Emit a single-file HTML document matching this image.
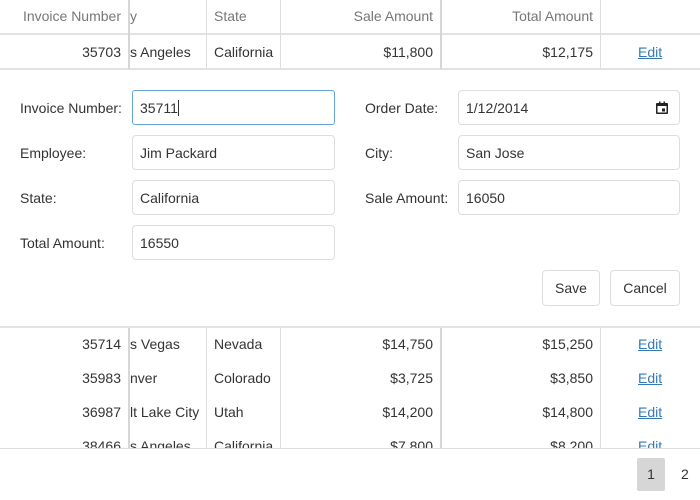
<!DOCTYPE html><html><head><style>
body{margin:0;width:700px;height:500px;position:relative;overflow:hidden;background:#fff;font-family:"Liberation Sans",sans-serif;font-size:14px;color:#333}
.a{position:absolute;line-height:20px;white-space:nowrap}
.r{text-align:right}
.h{color:#777}
.v{position:absolute;background:#ddd;width:1px}
.hl{position:absolute;left:0;width:700px;height:2px;background:#e2e2e2}
.in{position:absolute;box-sizing:border-box;border:1px solid #ddd;border-radius:4px;height:35px;line-height:35px;padding-left:7px;background:#fff}
.btn{position:absolute;box-sizing:border-box;border:1px solid #ddd;border-radius:4px;height:36px;line-height:35px;text-align:center;background:#fff}
a{color:#337ab7;text-decoration:underline}
</style></head><body>
<div class="a h r" style="left:0;width:121px;top:6px">Invoice Number</div>
<div class="a h" style="left:130px;top:6px">y</div>
<div class="a h" style="left:214px;top:6px">State</div>
<div class="a h r" style="left:290px;width:143px;top:6px">Sale Amount</div>
<div class="a h r" style="left:450px;width:143px;top:6px">Total Amount</div>
<div class="hl" style="top:33px"></div>
<div class="a r" style="left:0;width:121px;top:42px">35703</div>
<div class="a" style="left:130px;top:42px">s Angeles</div>
<div class="a" style="left:214px;top:42px">California</div>
<div class="a r" style="left:290px;width:143px;top:42px">$11,800</div>
<div class="a r" style="left:450px;width:143px;top:42px">$12,175</div>
<div class="a" style="left:638px;top:42px"><a>Edit</a></div>
<div class="hl" style="top:68px;height:2px;background:#e2e2e2"></div>
<div class="v" style="left:128px;width:2px;top:0;height:69px;background:#d6d6d6"></div>
<div class="v" style="left:206px;top:0;height:69px"></div>
<div class="v" style="left:280px;top:0;height:69px"></div>
<div class="v" style="left:440px;width:2px;top:0;height:69px;background:#d6d6d6"></div>
<div class="v" style="left:600px;top:0;height:69px"></div>
<div class="a" style="left:20px;top:98px">Invoice Number:</div>
<div class="in" style="left:132px;top:90px;width:203px;border-color:#66a3d9;border-radius:3px">35711<span style="display:inline-block;width:1px;height:16px;background:#333;vertical-align:-3px"></span></div>
<div class="a" style="left:20px;top:143px">Employee:</div>
<div class="in" style="left:132px;top:135px;width:203px">Jim Packard</div>
<div class="a" style="left:20px;top:188px">State:</div>
<div class="in" style="left:132px;top:180px;width:203px">California</div>
<div class="a" style="left:20px;top:233px">Total Amount:</div>
<div class="in" style="left:132px;top:225px;width:203px">16550</div>
<div class="a" style="left:365px;top:98px">Order Date:</div>
<div class="in" style="left:458px;top:90px;width:222px">1/12/2014
<svg style="position:absolute;left:195px;top:9px" width="16" height="16" viewBox="0 0 16 16"><rect x="2" y="3" width="12" height="11" rx="1" fill="#222"/><rect x="3.5" y="6" width="9" height="6.5" fill="#fff"/><rect x="5" y="1.5" width="1.5" height="3" fill="#222"/><rect x="9.5" y="1.5" width="1.5" height="3" fill="#222"/><rect x="8" y="8.5" width="3" height="3" fill="#222"/></svg></div>
<div class="a" style="left:365px;top:143px">City:</div>
<div class="in" style="left:458px;top:135px;width:222px">San Jose</div>
<div class="a" style="left:365px;top:188px">Sale Amount:</div>
<div class="in" style="left:458px;top:180px;width:222px">16050</div>
<div class="btn" style="left:542px;top:270px;width:58px">Save</div>
<div class="btn" style="left:610px;top:270px;width:70px">Cancel</div>
<div class="hl" style="top:326px;height:2px"></div>
<div class="v" style="left:128px;width:2px;top:328px;height:120px;background:#d6d6d6"></div>
<div class="v" style="left:206px;top:328px;height:120px"></div>
<div class="v" style="left:280px;top:328px;height:120px"></div>
<div class="v" style="left:440px;width:2px;top:328px;height:120px;background:#d6d6d6"></div>
<div class="v" style="left:600px;top:328px;height:120px"></div>
<div style="position:absolute;left:0;top:328px;width:700px;height:120px;overflow:hidden">
<div class="a r" style="left:0;width:121px;top:6px">35714</div><div class="a" style="left:130px;top:6px">s Vegas</div><div class="a" style="left:214px;top:6px">Nevada</div><div class="a r" style="left:290px;width:143px;top:6px">$14,750</div><div class="a r" style="left:450px;width:143px;top:6px">$15,250</div><div class="a" style="left:638px;top:6px"><a>Edit</a></div>
<div class="a r" style="left:0;width:121px;top:40px">35983</div><div class="a" style="left:130px;top:40px">nver</div><div class="a" style="left:214px;top:40px">Colorado</div><div class="a r" style="left:290px;width:143px;top:40px">$3,725</div><div class="a r" style="left:450px;width:143px;top:40px">$3,850</div><div class="a" style="left:638px;top:40px"><a>Edit</a></div>
<div class="a r" style="left:0;width:121px;top:74px">36987</div><div class="a" style="left:130px;top:74px">lt Lake City</div><div class="a" style="left:214px;top:74px">Utah</div><div class="a r" style="left:290px;width:143px;top:74px">$14,200</div><div class="a r" style="left:450px;width:143px;top:74px">$14,800</div><div class="a" style="left:638px;top:74px"><a>Edit</a></div>
<div class="a r" style="left:0;width:121px;top:108px">38466</div><div class="a" style="left:130px;top:108px">s Angeles</div><div class="a" style="left:214px;top:108px">California</div><div class="a r" style="left:290px;width:143px;top:108px">$7,800</div><div class="a r" style="left:450px;width:143px;top:108px">$8,200</div><div class="a" style="left:638px;top:108px"><a>Edit</a></div>
</div>
<div class="hl" style="top:448px;height:1px;background:#ddd"></div>
<div style="position:absolute;left:637px;top:458px;width:28px;height:33px;background:#d6d6d6;border-radius:2px;line-height:33px;text-align:center">1</div>
<div class="a" style="left:681px;top:464px">2</div>
</body></html>
